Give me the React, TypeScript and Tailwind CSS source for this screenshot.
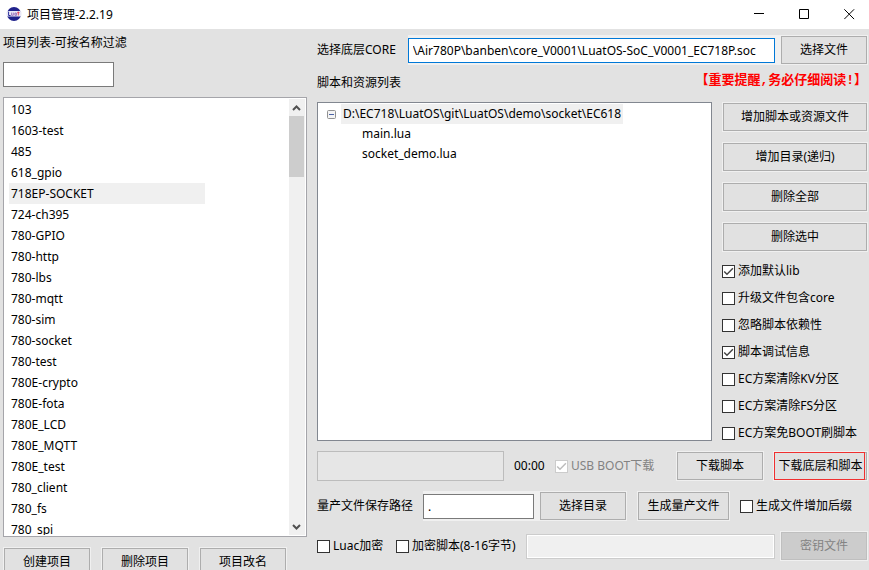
import { useState } from "react";
import type { ReactNode } from "react";

const projects = [
  "103",
  "1603-test",
  "485",
  "618_gpio",
  "718EP-SOCKET",
  "724-ch395",
  "780-GPIO",
  "780-http",
  "780-lbs",
  "780-mqtt",
  "780-sim",
  "780-socket",
  "780-test",
  "780E-crypto",
  "780E-fota",
  "780E_LCD",
  "780E_MQTT",
  "780E_test",
  "780_client",
  "780_fs",
  "780_spi",
];

const options = [
  { label: "添加默认lib", checked: true },
  { label: "升级文件包含core", checked: false },
  { label: "忽略脚本依赖性", checked: false },
  { label: "脚本调试信息", checked: true },
  { label: "EC方案清除KV分区", checked: false },
  { label: "EC方案清除FS分区", checked: false },
  { label: "EC方案免BOOT刷脚本", checked: false },
];

function Button({
  children,
  className = "",
  disabled = false,
}: {
  children: ReactNode;
  className?: string;
  disabled?: boolean;
}) {
  return (
    <button
      disabled={disabled}
      className={`h-7 shrink-0 whitespace-nowrap border text-center ring-1 ring-[#f0f0f0] ${
        disabled
          ? "border-[#bfbfbf] bg-[#cccccc] text-[#838383]"
          : "border-[#adadad] bg-[#e1e1e1] text-black"
      } ${className}`}
    >
      {children}
    </button>
  );
}

function Checkbox({
  label,
  defaultChecked = false,
  disabled = false,
}: {
  label: string;
  defaultChecked?: boolean;
  disabled?: boolean;
}) {
  return (
    <label
      className={`flex shrink-0 items-center gap-[3px] whitespace-nowrap ${
        disabled ? "text-[#838383]" : "text-black"
      }`}
    >
      <span className="grid size-[13px] place-items-center">
        <input
          type="checkbox"
          defaultChecked={defaultChecked}
          disabled={disabled}
          className="peer col-start-1 row-start-1 size-[13px] appearance-none border border-[#333333] bg-white disabled:border-[#cccccc]"
        />
        <svg
          viewBox="0 0 13 13"
          className="pointer-events-none invisible col-start-1 row-start-1 size-[13px] text-[#444444] peer-checked:visible peer-disabled:text-[#bcbcbc]"
          fill="none"
          stroke="currentColor"
          strokeWidth="1.4"
        >
          <path d="M2.2 6.4 5 9.3l5.9-6" />
        </svg>
      </span>
      <span>{label}</span>
    </label>
  );
}

function TitleBar() {
  return (
    <header className="flex h-[29px] shrink-0 items-center bg-white pr-3.5 pl-1.5">
      <svg width="16" height="16" viewBox="0 0 16 16">
        <circle cx="8" cy="7" r="7" fill="#20228c" />
        <rect x="0.5" y="4" width="15" height="5.6" rx="1.5" fill="#e9e9f6" />
        <path d="M2.6 4.6v3.9h2" fill="none" stroke="#2b2d9b" strokeWidth="1" />
        <path
          d="M5.6 5.6v2.7h1.7V5.6M10.4 8.5V6H8.9v2.3h1.5"
          fill="none"
          stroke="#8a5ab0"
          strokeWidth="0.8"
        />
        <path d="M12.3 4.6v3.9M11.2 5.7h2.4" fill="none" stroke="#e33a55" strokeWidth="0.9" />
      </svg>
      <h1 className="ml-[5px] flex-1">项目管理-2.2.19</h1>
      <div className="flex gap-[34px]">
        <button aria-label="最小化">
          <svg width="11" height="11" className="block" fill="none" stroke="#000">
            <path d="M0 4.5h10" />
          </svg>
        </button>
        <button aria-label="最大化">
          <svg width="11" height="11" className="block" fill="none" stroke="#000">
            <path d="M.5 .5h9v9h-9z" />
          </svg>
        </button>
        <button aria-label="关闭">
          <svg width="11" height="11" className="block" fill="none" stroke="#000">
            <path d="M.3 .3l9.8 9.8M10.1 .3L.3 10.1" />
          </svg>
        </button>
      </div>
    </header>
  );
}

function ScrollBar() {
  return (
    <div className="flex w-4 shrink-0 flex-col items-start bg-[#f0f0f0] text-[#505050]">
      <svg width="15" height="17" className="shrink-0" fill="none" stroke="currentColor" strokeWidth="2">
        <path d="M4 11l3.5-3.5L11 11" />
      </svg>
      <div className="h-[61px] w-[15px] shrink-0 bg-[#cdcdcd]" />
      <div className="flex-1" />
      <svg width="15" height="17" className="shrink-0" fill="none" stroke="currentColor" strokeWidth="2">
        <path d="M4 7l3.5 3.5L11 7" />
      </svg>
    </div>
  );
}

function ProjectPanel() {
  const [selected, setSelected] = useState("718EP-SOCKET");

  return (
    <aside className="w-[304px] shrink-0">
      <label htmlFor="filter" className="block pt-1 leading-5">
        项目列表-可按名称过滤
      </label>
      <input
        id="filter"
        className="mt-[9px] block h-[25px] w-[111px] border border-[#7a7a7a] bg-white px-1"
      />

      <div className="mt-2.5 flex h-[440px] border border-[#a5a5aa] bg-white p-px">
        <ul className="flex-1 overflow-hidden pl-1">
          {projects.map((name) => (
            <li key={name}>
              <button
                onClick={() => setSelected(name)}
                className={`block h-[21px] w-[196px] px-0.5 text-left ${
                  name === selected ? "bg-[#f0f0f0]" : ""
                }`}
              >
                {name}
              </button>
            </li>
          ))}
        </ul>
        <ScrollBar />
      </div>

      <div className="mt-[11px] flex gap-3 pl-px">
        <Button className="w-[86px]">创建项目</Button>
        <Button className="w-[86px]">删除项目</Button>
        <Button className="w-[86px]">项目改名</Button>
      </div>
    </aside>
  );
}

function FileTree() {
  return (
    <div className="flex-1 border border-[#828790] bg-white pt-px pl-[9px]">
      <div className="flex h-5 items-center gap-[5px]">
        <svg width="9" height="9" fill="none">
          <rect x=".5" y=".5" width="8" height="8" rx="1" fill="#f4f4f4" stroke="#919191" />
          <path d="M2 4.5h5" stroke="#4b63a7" />
        </svg>
        <span className="bg-[#f0f0f0] px-0.5 leading-5">
          D:\EC718\LuatOS\git\LuatOS\demo\socket\EC618
        </span>
      </div>
      <ul className="pl-[35px] leading-5">
        <li>main.lua</li>
        <li>socket_demo.lua</li>
      </ul>
    </div>
  );
}

export default function App() {
  return (
    <div className="flex h-screen flex-col overflow-hidden bg-[#e2e2e2] font-['Noto_Sans','Noto_Sans_CJK_SC',sans-serif] text-[12px] leading-4 text-black">
      <TitleBar />
      <div className="flex flex-1 gap-2.5 pr-0.5 pl-[3px]">
        <ProjectPanel />

        <main className="min-w-0 flex-1 pt-1.5">
          <div className="flex items-center">
            <label htmlFor="core" className="mr-3 shrink-0">
              选择底层CORE
            </label>
            <div className="flex h-[30px] min-w-0 flex-1 items-center bg-[#f0f0f0] pr-1.5">
              <input
                id="core"
                defaultValue="\Air780P\banben\core_V0001\LuatOS-SoC_V0001_EC718P.soc"
                className="h-[25px] w-full border border-[#0078d7] bg-white px-1"
              />
            </div>
            <Button className="w-[86px]">选择文件</Button>
          </div>

          <div className="flex h-[37px] items-start justify-between pt-2">
            <h2 className="leading-5">脚本和资源列表</h2>
            <a
              href="#notice"
              className="font-['Liberation_Mono','Noto_Sans_CJK_SC',monospace] text-[13px] font-bold whitespace-nowrap text-[#ff0000]"
            >
              【重要提醒,务必仔细阅读!】
            </a>
          </div>

          <div className="flex gap-2.5">
            <FileTree />
            <div className="w-[145px] shrink-0">
              <div className="flex flex-col gap-3 pt-px pl-px">
                <Button>增加脚本或资源文件</Button>
                <Button>增加目录(递归)</Button>
                <Button>删除全部</Button>
                <Button>删除选中</Button>
              </div>
              <div className="flex flex-col gap-[11px] pt-3">
                {options.map((option) => (
                  <Checkbox
                    key={option.label}
                    label={option.label}
                    defaultChecked={option.checked}
                  />
                ))}
              </div>
            </div>
          </div>

          {/* Download */}
          <div className="mt-2.5 flex items-center">
            <div
              role="progressbar"
              aria-label="下载进度"
              className="mr-2.5 h-[30px] flex-1 border border-[#bcbcbc] bg-[#e6e6e6]"
            />
            <time className="w-[41px] shrink-0">00:00</time>
            <div className="w-[122px] shrink-0">
              <Checkbox label="USB BOOT下载" defaultChecked disabled />
            </div>
            <Button className="w-[86px]">下载脚本</Button>
            <div className="relative ml-[11px]">
              <Button className="w-[93px]">下载底层和脚本</Button>
              <span className="pointer-events-none absolute inset-y-0 right-0.5 left-0 border border-[#f03030]" />
            </div>
          </div>

          {/* Mass production output */}
          <div className="mt-2.5 flex items-center">
            <label htmlFor="output" className="mr-2.5 shrink-0">
              量产文件保存路径
            </label>
            <div className="flex h-[30px] min-w-0 flex-1 items-center bg-[#f0f0f0] pr-1.5">
              <input
                id="output"
                defaultValue="."
                className="h-[25px] w-full border border-[#7a7a7a] bg-white px-1"
              />
            </div>
            <Button className="mr-3 w-[86px]">选择目录</Button>
            <Button className="mr-[11px] w-[91px]">生成量产文件</Button>
            <div className="w-[127px] shrink-0">
              <Checkbox label="生成文件增加后缀" />
            </div>
          </div>

          {/* Encryption */}
          <div className="mt-2.5 flex h-[30px] items-center">
            <div className="w-[79px] shrink-0">
              <Checkbox label="Luac加密" />
            </div>
            <div className="w-[130px] shrink-0">
              <Checkbox label="加密脚本(8-16字节)" />
            </div>
            <input
              aria-label="密钥"
              disabled
              className="mr-1.5 h-[25px] min-w-0 flex-1 border border-[#cccccc] bg-[#f0f0f0] px-1 inset-ring inset-ring-white"
            />
            <Button className="w-[86px]" disabled>
              密钥文件
            </Button>
          </div>
        </main>
      </div>
    </div>
  );
}
